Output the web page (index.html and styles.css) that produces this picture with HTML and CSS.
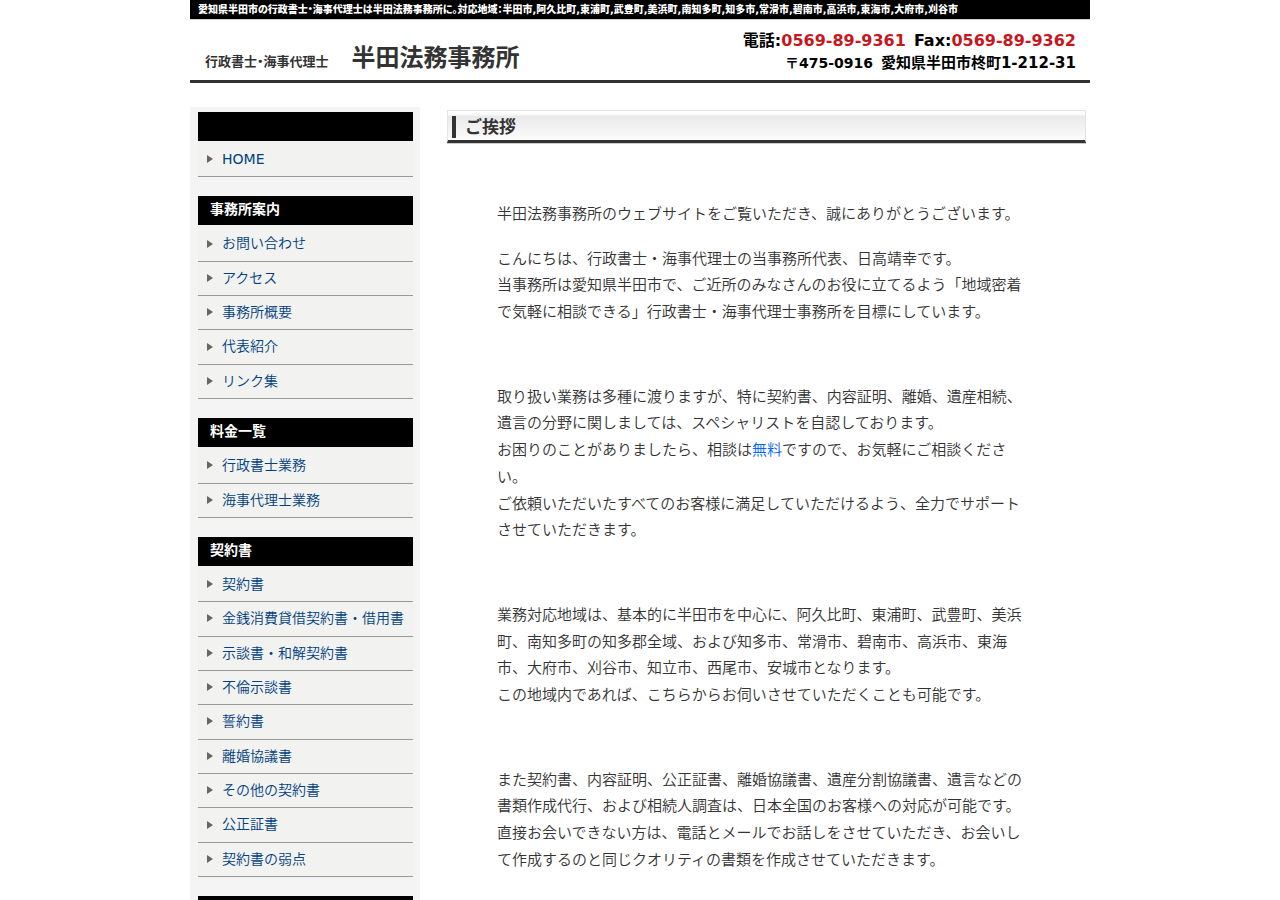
FILE: index.html
```html
<!DOCTYPE html>
<html lang="ja">
<head>
<meta charset="utf-8">
<meta name="viewport" content="width=device-width, initial-scale=1">
<title>半田法務事務所</title>
<link rel="stylesheet" href="styles.css">
</head>
<body>
<div class="page">
  <h1 class="strapline">愛知県半田市の行政書士・海事代理士は半田法務事務所に。対応地域：半田市,阿久比町,東浦町,武豊町,美浜町,南知多町,知多市,常滑市,碧南市,高浜市,東海市,大府市,刈谷市</h1>
  <header class="header">
    <div class="brand">
      <span class="brand-role">行政書士・海事代理士</span>
      <span class="brand-name">半田法務事務所</span>
    </div>
    <address class="contact">
      <p class="phones"><span>電話:<b class="number">0569-89-9361</b></span><span>Fax:<b class="number">0569-89-9362</b></span></p>
      <p class="place"><span class="postcode">〒475-0916</span><span>愛知県半田市柊町1-212-31</span></p>
    </address>
  </header>
  <div class="columns">
    <nav class="sidebar">
      <h2 class="menu-title"></h2>
      <ul class="menu">
        <li><a class="latin" href="#">HOME</a></li>
      </ul>
      <h2 class="menu-title">事務所案内</h2>
      <ul class="menu">
        <li><a href="#">お問い合わせ</a></li>
        <li><a href="#">アクセス</a></li>
        <li><a href="#">事務所概要</a></li>
        <li><a href="#">代表紹介</a></li>
        <li><a href="#">リンク集</a></li>
      </ul>
      <h2 class="menu-title">料金一覧</h2>
      <ul class="menu">
        <li><a href="#">行政書士業務</a></li>
        <li><a href="#">海事代理士業務</a></li>
      </ul>
      <h2 class="menu-title">契約書</h2>
      <ul class="menu">
        <li><a href="#">契約書</a></li>
        <li><a href="#">金銭消費貸借契約書・借用書</a></li>
        <li><a href="#">示談書・和解契約書</a></li>
        <li><a href="#">不倫示談書</a></li>
        <li><a href="#">誓約書</a></li>
        <li><a href="#">離婚協議書</a></li>
        <li><a href="#">その他の契約書</a></li>
        <li><a href="#">公正証書</a></li>
        <li><a href="#">契約書の弱点</a></li>
      </ul>
      <h2 class="menu-title"></h2>
    </nav>
    <main class="main">
      <h2 class="heading"><span class="heading-bar"></span>ご挨拶</h2>
      <div class="article">
        <section><p>半田法務事務所のウェブサイトをご覧いただき、誠にありがとうございます。</p>
        <p>こんにちは、行政書士・海事代理士の当事務所代表、日高靖幸です。<br>当事務所は愛知県半田市で、ご近所のみなさんのお役に立てるよう「地域密着で気軽に相談できる」行政書士・海事代理士事務所を目標にしています。</p></section>
        <section><p>取り扱い業務は多種に渡りますが、特に契約書、内容証明、離婚、遺産相続、遺言の分野に関しましては、スペシャリストを自認しております。<br>お困りのことがありましたら、相談は<span class="free">無料</span>ですので、お気軽にご相談ください。<br>ご依頼いただいたすべてのお客様に満足していただけるよう、全力でサポートさせていただきます。</p></section>
        <section><p>業務対応地域は、基本的に半田市を中心に、阿久比町、東浦町、武豊町、美浜町、南知多町の知多郡全域、および知多市、常滑市、碧南市、高浜市、東海市、大府市、刈谷市、知立市、西尾市、安城市となります。<br>この地域内であれば、こちらからお伺いさせていただくことも可能です。</p></section>
        <section><p>また契約書、内容証明、公正証書、離婚協議書、遺産分割協議書、遺言などの書類作成代行、および相続人調査は、日本全国のお客様への対応が可能です。<br>直接お会いできない方は、電話とメールでお話しをさせていただき、お会いして作成するのと同じクオリティの書類を作成させていただきます。</p></section>
      </div>
    </main>
  </div>
</div>
</body>
</html>
```
FILE: styles.css
```css
* { box-sizing: border-box; }
body {
  margin: 0;
  background: #fff;
  color: #333;
  font-family: "DejaVu Sans", "Noto Sans CJK JP", sans-serif;
  font-size: 15px;
  font-weight: 350;
  text-spacing-trim: space-all;
}
h1, h2, p, ul { margin: 0; padding: 0; }
.page { max-width: 900px; margin: 0 auto; }

.strapline {
  background: #000;
  color: #fff;
  padding: 0 8px;
  border-bottom: 1px solid #ccc;
  font-size: 10px;
  font-weight: 900;
  line-height: 19px;
  font-feature-settings: "palt";
}
.header {
  display: flex;
  justify-content: space-between;
  min-height: 63px;
  padding: 10px 14px 0 15px;
  border-bottom: 3px solid #333;
}
.brand {
  display: flex;
  align-items: baseline;
  gap: 23px;
  padding-top: 14px;
  font-weight: bold;
  line-height: 28px;
  font-feature-settings: "palt";
}
.brand-role { font-size: 13px; }
.brand-name { font-size: 24px; font-feature-settings: normal; }
.contact {
  color: #000;
  font-style: normal;
  font-weight: bold;
  font-size: 15px;
  line-height: 22px;
}
.phones, .place { display: flex; justify-content: flex-end; gap: 8px; }
.phones { font-size: 16px; }
.number { color: #c8161d; }
.postcode { font-size: 14px; }

.columns { display: flex; margin-top: 24px; }
.sidebar {
  flex: 0 0 230px;
  padding: 5px 7px 0 8px;
  background: #f4f4f4;
}
.menu-title {
  height: 29px;
  padding: 0 12px;
  background: #000;
  color: #fff;
  font-size: 14px;
  line-height: 27px;
}
.menu {
  list-style: none;
  margin-bottom: 19px;
  padding-top: 2px;
  background: #f2f2f0;
}
.menu a {
  display: flex;
  align-items: center;
  padding: 4px 8px 5px 9px;
  border-bottom: 1px solid #999;
  color: #004080;
  font-size: 14px;
  line-height: 1.74;
  text-decoration: none;
  white-space: nowrap;
}
.menu .latin { font-weight: 400; }
.menu a::before {
  content: "";
  margin-right: 9px;
  border-left: 6px solid #666;
  border-top: 4px solid transparent;
  border-bottom: 4px solid transparent;
}

.main { flex: 1; min-width: 0; padding: 3px 4px 0 27px; }
.heading {
  display: flex;
  align-items: center;
  gap: 9px;
  height: 33px;
  padding: 2px 4px 0;
  border: 1px solid #e4e4e4;
  border-bottom: 3px solid #333;
  box-shadow: 0 1px #ccc;
  background: linear-gradient(#fff 0, #fafafa 4px, #e9e9e9 5px, #fcfcfc 100%);
  font-size: 17px;
  line-height: 28px;
}
.heading-bar { width: 4px; height: 22px; background: #333; }
.article { padding: 58px 60px 0 50px; line-height: 1.78; }
.article section + section { margin-top: 58px; }
.article p + p { margin-top: 18px; }
.free { color: #0066ff; }
```
